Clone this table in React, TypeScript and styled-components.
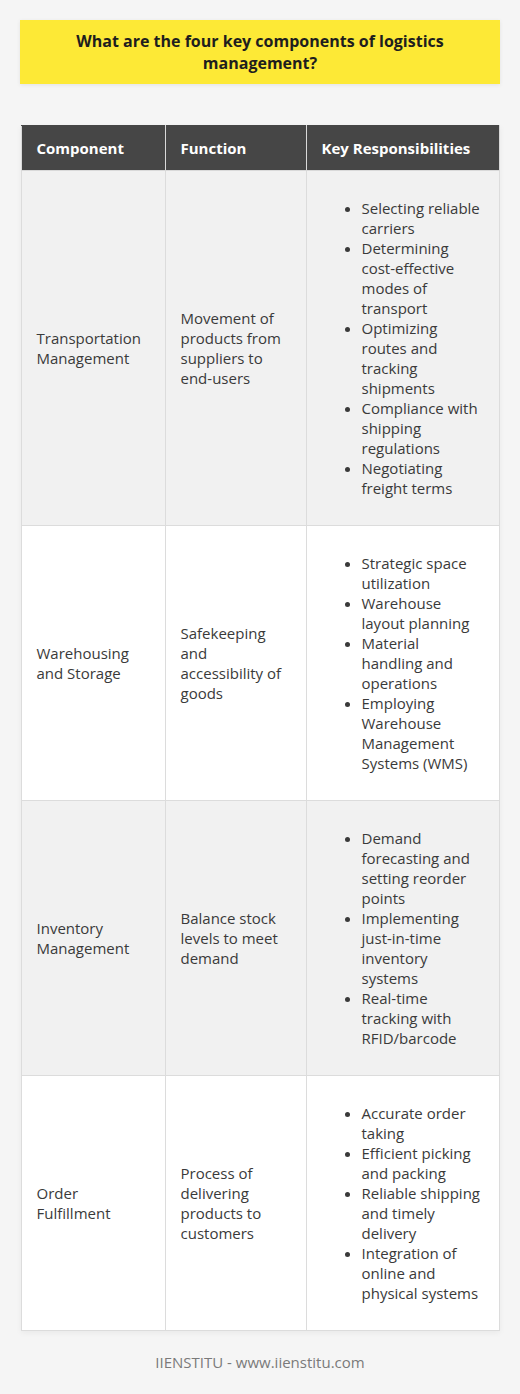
import React from "react";
import styled, { createGlobalStyle } from "styled-components";

const GlobalStyle = createGlobalStyle`
  html, body {
    margin: 0;
    padding: 0;
    background: #f5f5f5;
    font-family: "Open Sans", "Liberation Sans", sans-serif;
  }
`;

const Page = styled.div`
  padding: 20px 20px 0;
  display: flex;
  flex-direction: column;
  align-items: center;
`;

const TitleBox = styled.div`
  width: 100%;
  box-sizing: border-box;
  background: #fde936;
  padding: 10px 20px;
  box-shadow: 0 1px 4px rgba(0, 0, 0, 0.08);
`;

const Title = styled.h1`
  margin: 0;
  font-size: 16px;
  line-height: 22px;
  font-weight: 700;
  color: #1e1e1e;
  text-align: center;
`;

const Table = styled.table`
  width: 478px;
  margin-top: 41px;
  table-layout: fixed;
  border-collapse: collapse;
  box-shadow: 0 2px 6px rgba(0, 0, 0, 0.05);
  font-size: 15px;
  line-height: 20px;
`;

const HeadCell = styled.th<{ $w: number }>`
  box-sizing: border-box;
  width: ${(p) => p.$w}px;
  background: #464646;
  color: #fff;
  font-weight: 700;
  text-align: left;
  padding: 12px 15px;
  border: 1px solid #d9d9d9;
  border-top-color: #464646;
`;

const Row = styled.tr<{ $shade: boolean }>`
  background: ${(p) => (p.$shade ? "#f1f1f1" : "#ffffff")};
`;

const Cell = styled.td`
  padding: 12px 15px;
  border: 1px solid #dcdcdc;
  vertical-align: middle;
  color: #3a3a3a;
`;

const List = styled.ul`
  margin: 15px 0;
  padding-left: 40px;
`;

const Footer = styled.div`
  margin-top: 21px;
  font-size: 15px;
  line-height: 20px;
  color: #7a7a7a;
  text-align: center;
`;

type Item = { name: string; fn: string; tasks: string[] };

const rows: Item[] = [
  {
    name: "Transportation Management",
    fn: "Movement of products from suppliers to end-users",
    tasks: [
      "Selecting reliable carriers",
      "Determining cost-effective modes of transport",
      "Optimizing routes and tracking shipments",
      "Compliance with shipping regulations",
      "Negotiating freight terms",
    ],
  },
  {
    name: "Warehousing and Storage",
    fn: "Safekeeping and accessibility of goods",
    tasks: [
      "Strategic space utilization",
      "Warehouse layout planning",
      "Material handling and operations",
      "Employing Warehouse Management Systems (WMS)",
    ],
  },
  {
    name: "Inventory Management",
    fn: "Balance stock levels to meet demand",
    tasks: [
      "Demand forecasting and setting reorder points",
      "Implementing just-in-time inventory systems",
      "Real-time tracking with RFID/barcode",
    ],
  },
  {
    name: "Order Fulfillment",
    fn: "Process of delivering products to customers",
    tasks: [
      "Accurate order taking",
      "Efficient picking and packing",
      "Reliable shipping and timely delivery",
      "Integration of online and physical systems",
    ],
  },
];

const App = (): JSX.Element => {
  return (
    <>
      <GlobalStyle />
      <Page>
        <TitleBox>
          <Title>What are the four key components of logistics management?</Title>
        </TitleBox>
        <Table>
          <thead>
            <tr>
              <HeadCell $w={144}>Component</HeadCell>
              <HeadCell $w={141}>Function</HeadCell>
              <HeadCell $w={193}>Key Responsibilities</HeadCell>
            </tr>
          </thead>
          <tbody>
            {rows.map((r, i) => (
              <Row key={r.name} $shade={i % 2 === 0}>
                <Cell>{r.name}</Cell>
                <Cell>{r.fn}</Cell>
                <Cell>
                  <List>
                    {r.tasks.map((t) => (
                      <li key={t}>{t}</li>
                    ))}
                  </List>
                </Cell>
              </Row>
            ))}
          </tbody>
        </Table>
        <Footer>IIENSTITU - www.iienstitu.com</Footer>
      </Page>
    </>
  );
};

export default App;
